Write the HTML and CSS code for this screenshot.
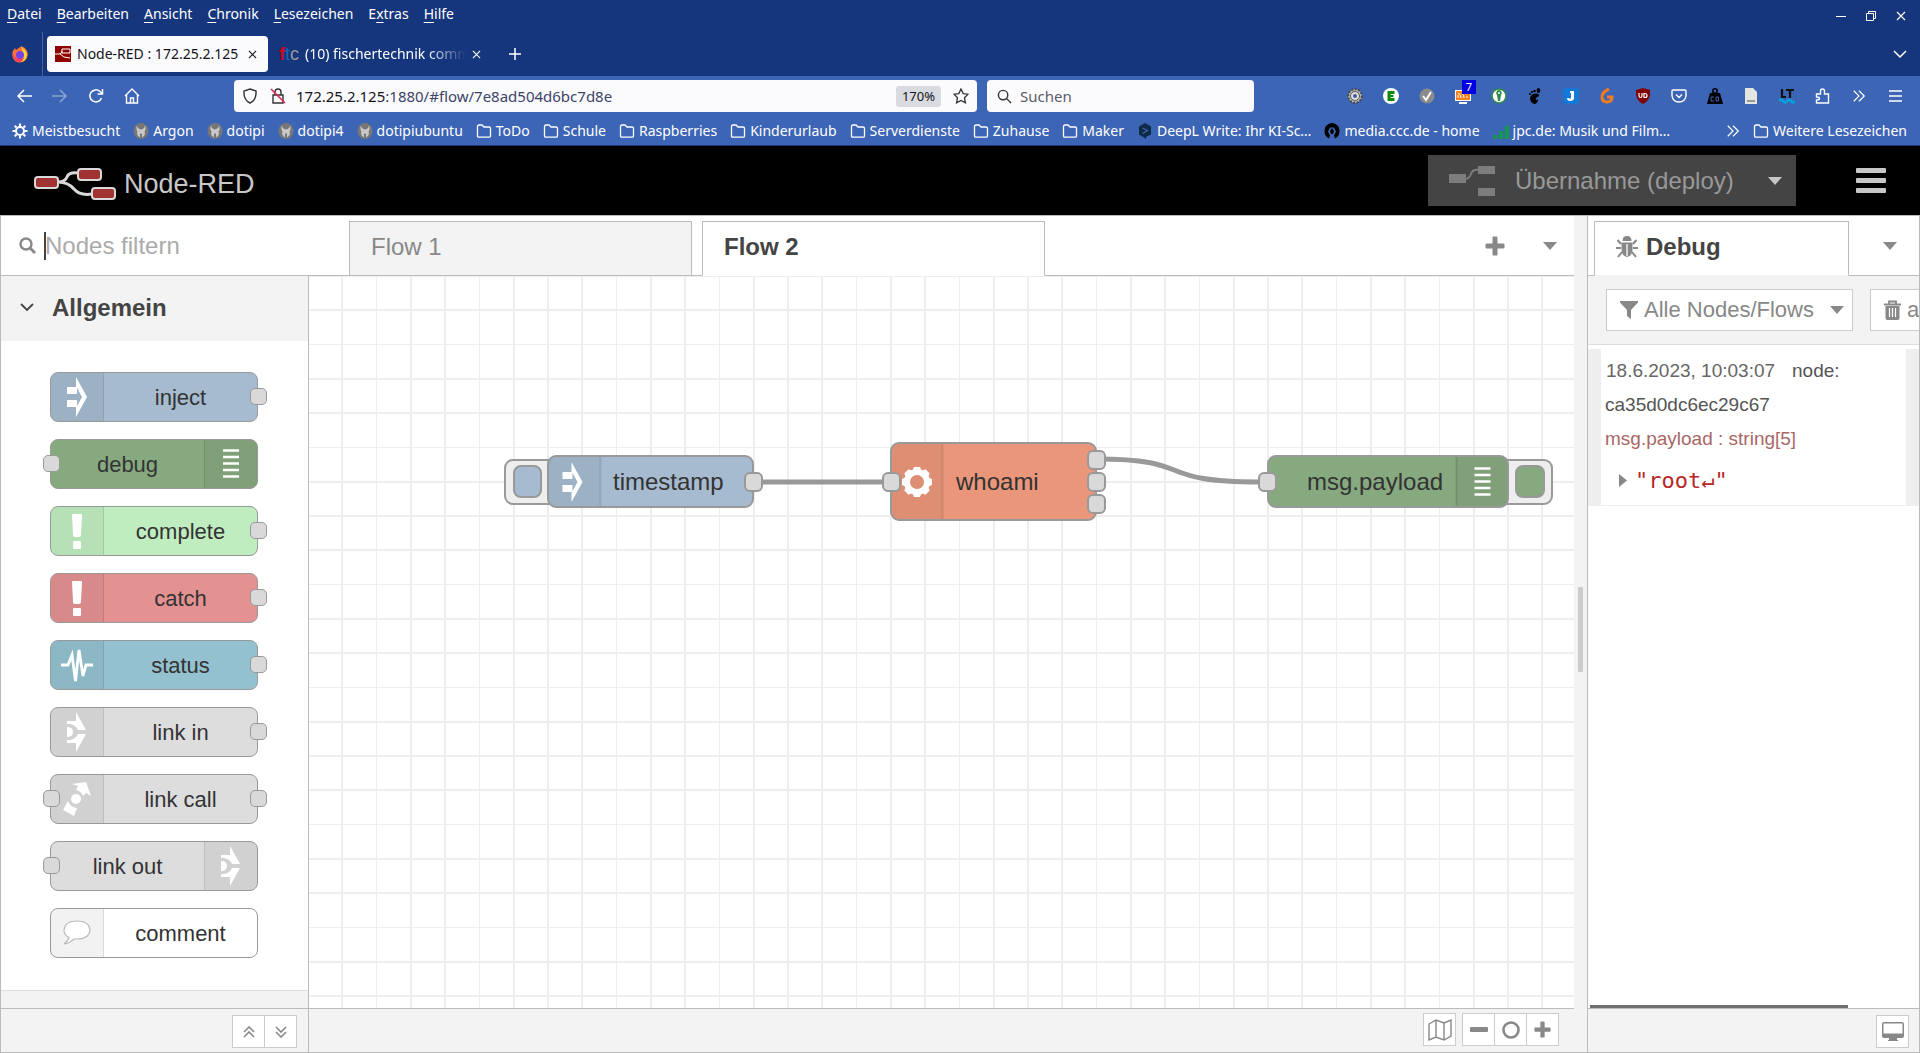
FILE: index.html
```html
<!DOCTYPE html>
<html lang="de">
<head>
<meta charset="utf-8">
<title>Node-RED : 172.25.2.125</title>
<link rel="stylesheet" href="styles.css">
</head>
<body>
<svg class="defs" aria-hidden="true">
  <symbol id="i-folder" viewBox="0 0 16 16"><path d="M1.500 13V3.500q0-1.500 1.500-1.500h3l2 2h5q1.500 0 1.500 1.500V13q0 1.200-1.500 1.200H3Q1.500 14.200 1.500 13z" fill="none" stroke="currentColor" stroke-width="1.300"/></symbol>
  <symbol id="i-rasp" viewBox="0 0 16 16"><ellipse cx="8" cy="8" rx="7.500" ry="8" fill="#777"/><path d="M4 2.500Q2.500 6 4.500 8.500L4 11q1 2.500 3 3.500v-4h2v4q2-1 3-3.500l-.500-2.500q2-2.500.500-6-.500 3.500-4 4-3.500-.500-4-4z" fill="#c9c9c9"/></symbol>
  <symbol id="i-gear" viewBox="0 0 16 16"><circle cx="8" cy="8" r="4" fill="none" stroke="currentColor" stroke-width="2"/><path d="M8 .500V3M8 13v2.500M.500 8H3M13 8h2.500M2.700 2.700l1.800 1.800M11.500 11.500l1.800 1.800M2.700 13.300l1.800-1.800M11.500 4.500l1.800-1.800" stroke="currentColor" stroke-width="2"/></symbol>
  <symbol id="i-close" viewBox="0 0 10 10"><path d="M1 1l8 8M9 1l-8 8" stroke="currentColor" stroke-width="1.200"/></symbol>
  <symbol id="i-more" viewBox="0 0 16 16"><path d="M2 2l6 6-6 6M8 2l6 6-6 6" fill="none" stroke="currentColor" stroke-width="1.400"/></symbol>
  <symbol id="i-caret" viewBox="0 0 14 8"><path d="M0 0h14L7 8z" fill="currentColor"/></symbol>
  <symbol id="i-plus" viewBox="0 0 20 20"><path d="M7.500 1.500q0-1 1-1h3q1 0 1 1v6h6q1 0 1 1v3q0 1-1 1h-6v6q0 1-1 1h-3q-1 0-1-1v-6h-6q-1 0-1-1v-3q0-1 1-1h6z" fill="currentColor"/></symbol>
  <symbol id="i-search" viewBox="0 0 17 17"><circle cx="7" cy="7" r="5.500" fill="none" stroke="currentColor" stroke-width="2.400"/><path d="M11 11l5 5" stroke="currentColor" stroke-width="2.800"/></symbol>
  <symbol id="i-arrow" viewBox="0 0 20 40"><path d="M0 10h9V0l11 20L9 40V30H0v-7h10v6l5-9-5-9v6H0z" fill="#fff"/></symbol>
  <symbol id="i-bang" viewBox="0 0 10 35"><path d="M1 0h8q1 0 1 1l-1 20q0 2-2 2H3q-2 0-2-2L0 1q0-1 1-1zM2 27h6q1 0 1 1v6q0 1-1 1H2q-1 0-1-1v-6q0-1 1-1z" fill="#fff"/></symbol>
  <symbol id="i-pulse" viewBox="0 0 32 40"><path d="M0 20h7l4-10 3.500 26L18 5l4 26 3-11h7" fill="none" stroke="#fff" stroke-width="2.800"/></symbol>
  <symbol id="i-link" viewBox="0 0 20 40"><path d="M0 9h9V0l10 18h-8q-2-5-8-6H0zM0 15q6 0 6 5t-6 5zM0 28h3q6-1 8-6h8L9 40v-9H0z" fill="#fff"/></symbol>
  <symbol id="i-linkcall" viewBox="0 0 28 34"><g fill="#fff"><circle cx="13" cy="17" r="5"/><path d="M9 2L23 0l5 14-5-3-3 3q-2-5-7-6l2-4zM5 19q2 6 9 7l-3 8L0 28z"/></g></symbol>
  <symbol id="i-lines" viewBox="0 0 16 30"><path d="M0 1.500h16M0 8h16M0 14.500h16M0 21h16M0 27.500h16" stroke="#fff" stroke-width="2.400"/></symbol>
  <symbol id="i-bubble" viewBox="0 0 28 26"><path d="M6 17.500Q1 15 1 10 2 1 14 1t13 9q-1 9-13 9h-3q-4 4-10 5 4-3 5-6.500z" fill="#fff" stroke="#bbb" stroke-width="1.200"/></symbol>
</svg>

<header class="browser">
  <div class="browser__top">
    <nav class="menubar" aria-label="Menü">
      <a href="#"><u>D</u>atei</a><a href="#"><u>B</u>earbeiten</a><a href="#"><u>A</u>nsicht</a><a href="#"><u>C</u>hronik</a><a href="#"><u>L</u>esezeichen</a><a href="#">E<u>x</u>tras</a><a href="#"><u>H</u>ilfe</a>
    </nav>
    <div class="window-buttons">
      <button aria-label="Minimieren"><svg width="10" height="10"><path d="M0 5.500h10" stroke="#fff"/></svg></button>
      <button aria-label="Wiederherstellen"><svg width="10" height="10"><path d="M.5 2.500h7v7h-7zM2.500 2.500v-2h7v7h-2" fill="none" stroke="#fff"/></svg></button>
      <button aria-label="Schließen"><svg width="10" height="10"><use href="#i-close"/></svg></button>
    </div>
  </div>
  <div class="tabstrip">
    <button class="tabstrip__home" aria-label="Firefox View"><svg width="16" height="18" viewBox="0 0 16 18"><path d="M8 2q5-1 7.500 5 1 6-3 9-5 3-9.500 0Q-1 12 .800 6L3 3l1 2z" fill="#ff7139"/><path d="M9 0q1 3 4 5 2 2 2 5-1 6-6 7 3-4 2-8Z" fill="#ffd43a"/><circle cx="8" cy="10" r="4" fill="#7542e5"/><path d="M1 9q2 5 7 5 3 0 4-2-1 5-5 5-5-1-6-8z" fill="#ff3b5c"/></svg></button>
    <div class="tab tab--active">
      <svg width="16" height="16" viewBox="0 0 16 16"><path fill="#8f0000" d="M0 0h16v16H0z"/><path d="M0 8h4q3 0 3-3M5 8q3 4 10 4M7 3h8v4H7z" fill="none" stroke="#fff"/></svg>
      <span class="tab__title">Node-RED : 172.25.2.125</span>
      <button aria-label="Tab schließen"><svg width="9" height="9"><use href="#i-close"/></svg></button>
    </div>
    <div class="tab">
      <span class="ftc" aria-hidden="true"><b>f</b><i>t</i>c</span>
      <span class="tab__title tab__title--fade">(10) fischertechnik comm</span>
      <button aria-label="Tab schließen"><svg width="9" height="9"><use href="#i-close"/></svg></button>
    </div>
    <button class="tabstrip__new" aria-label="Neuer Tab"><svg width="12" height="12"><path d="M6 0v12M0 6h12" stroke="#fff" stroke-width="1.500"/></svg></button>
    <button class="tabstrip__all" aria-label="Alle Tabs"><svg width="14" height="8"><path d="M1 1l6 6 6-6" fill="none" stroke="#fff" stroke-width="1.500"/></svg></button>
  </div>
  <div class="toolbar">
    <div class="toolbar__nav">
      <button aria-label="Zurück"><svg width="16" height="14"><path d="M16 7H2M8 1L2 7l6 6" fill="none" stroke="#fff" stroke-width="1.500"/></svg></button>
      <button aria-label="Vor" class="dim"><svg width="16" height="14"><path d="M0 7h14M8 1l6 6-6 6" fill="none" stroke="#fff" stroke-width="1.500"/></svg></button>
      <button aria-label="Neu laden"><svg width="16" height="16"><path d="M13.500 10A6 6 0 1 1 12 3.500l2 2M14.500 1v5h-5" fill="none" stroke="#fff" stroke-width="1.500"/></svg></button>
      <button aria-label="Startseite"><svg width="16" height="16"><path d="M1 8l7-7 7 7M2.500 7v8h11V7M6.500 15v-5h3v5" fill="none" stroke="#fff" stroke-width="1.400"/></svg></button>
    </div>
    <div class="urlbar">
      <svg width="16" height="16" viewBox="0 0 16 16"><path d="M8 1l6 2q.600 9-6 12Q1.400 12 2 3z" fill="none" stroke="#333" stroke-width="1.400"/></svg>
      <svg width="16" height="16" viewBox="0 0 16 16"><path d="M3 7h10v8H3zM5 7V4q0-3 3-3t3 3v3" fill="none" stroke="#333" stroke-width="1.400"/><path d="M1 1l14 14" stroke="#e22850" stroke-width="1.600"/></svg>
      <span class="urlbar__text">172.25.2.125<span>:1880/#flow/7e8ad504d6bc7d8e</span></span>
      <button class="zoom-level">170%</button>
      <button aria-label="Lesezeichen setzen"><svg width="16" height="16" viewBox="0 0 16 16"><path d="M8 1l2.200 4.600 4.800.600-3.500 3.500.900 5.100L8 12.400l-4.400 2.400.900-5.100L1 6.200l4.800-.600z" fill="none" stroke="#333" stroke-width="1.300"/></svg></button>
    </div>
    <label class="searchbar">
      <svg width="15" height="15" viewBox="0 0 16 16"><circle cx="6.500" cy="6.500" r="5" fill="none" stroke="#333" stroke-width="1.500"/><path d="M10 10l5 5" stroke="#333" stroke-width="1.500"/></svg>
      <input type="text" placeholder="Suchen" aria-label="Suchen">
    </label>
    <div class="extensions">
      <button aria-label="Einstellungen"><svg width="16" height="16" viewBox="0 0 16 16"><circle cx="8" cy="8" r="6.800" fill="#bbb" stroke="#444" stroke-width="2" stroke-dasharray="2 1.500"/><circle cx="8" cy="8" r="4.500" fill="#ddd" stroke="#555"/><circle cx="8" cy="8" r="2" fill="#445f9e"/></svg></button>
      <button aria-label="E"><svg width="16" height="16" viewBox="0 0 16 16"><circle cx="8" cy="8" r="8" fill="#fff"/><path d="M4.500 3h7v3h-4v1h3v2h-3v1h4v3h-7z" fill="#0b8a0b"/></svg></button>
      <button aria-label="Prüfung"><svg width="16" height="16" viewBox="0 0 16 16"><circle cx="8" cy="8" r="7.500" fill="#8b8b8b"/><path d="M4 8l3 4 5-8" fill="none" stroke="#fff" stroke-width="2"/></svg></button>
      <button aria-label="Feeds" class="badged"><svg width="16" height="16" viewBox="0 0 16 16"><path fill="#fff" d="M0 2h16v11H0zM4 14h8v2H4z"/><path fill="#f58220" d="M1 3h14v9H1z"/><path d="M3 10V7M6 10q0-4-3-5M9 10q0-3-2-5M12 10V8" stroke="#fff" fill="none"/></svg><span class="badge">7</span></button>
      <button aria-label="Passwörter"><svg width="16" height="16" viewBox="0 0 16 16"><circle cx="8" cy="8" r="7" fill="#fff" stroke="#2c8a4b" stroke-width="1.500"/><path d="M8 2a3 3 0 0 1 2 5L9 13H7L6 7a3 3 0 0 1 2-5z" fill="#2c8a4b"/><circle cx="8" cy="5" r="1" fill="#fff"/></svg></button>
      <button aria-label="GNOME"><svg width="16" height="16" viewBox="0 0 16 16"><path d="M9 5.500q4 0 2.500 3L9 10q-1 1 0 2 1 0 2-1 0 5-4 5-4-2-4-6 1-4.500 6-4.500z"/><ellipse cx="11.500" cy="2.500" rx="1.800" ry="2.500"/><circle cx="7.500" cy="3" r="1.300"/><circle cx="5" cy="4" r="1.100"/><circle cx="3" cy="6" r="1"/></svg></button>
      <button aria-label="Joplin"><svg width="16" height="16" viewBox="0 0 16 16"><rect width="16" height="16" rx="3" fill="#1478d6"/><path d="M7 3h4v7q0 3-4 3-3 0-3-3h2q1 1.500 2 0V5H7z" fill="#fff"/></svg></button>
      <button aria-label="G"><svg width="16" height="16" viewBox="0 0 16 16"><path d="M10 1Q3 4 3 9q0 5 5 5t5-5H8" fill="none" stroke="#f47b20" stroke-width="3"/></svg></button>
      <button aria-label="uBlock"><svg width="16" height="16" viewBox="0 0 16 16"><path d="M8 0l7 2q1 10-7 14Q0 12 1 2z" fill="#800000"/><path d="M4 5v3q0 1.500 1.500 1.500T7 8V5M9 5.500h1q2 0 2 2t-2 2H9z" fill="none" stroke="#fff" stroke-width="1.200"/></svg></button>
      <button aria-label="Pocket"><svg width="16" height="16" viewBox="0 0 16 16"><path d="M2 2h12q1 0 1 1v5q-1 6-7 6T1 8V3q0-1 1-1zM5 6.500l3 3 3-3" fill="none" stroke="#fff" stroke-width="1.400"/></svg></button>
      <button aria-label="Gewicht"><svg width="16" height="16" viewBox="0 0 16 16"><circle cx="8" cy="3" r="2.200" fill="none" stroke="#000" stroke-width="1.500"/><path d="M3 5h10l3 11H0z"/><path d="M7 9H4v4h3M9 9h2.500v4H9z" fill="none" stroke="#3d65b5"/></svg></button>
      <button aria-label="Dokument"><svg width="16" height="16" viewBox="0 0 16 16"><path d="M2 0h8l4 4v12H2z" fill="#e4e4e0"/><path d="M4 12h8v2H4z" fill="#999"/></svg></button>
      <button aria-label="LanguageTool"><svg width="16" height="16" viewBox="0 0 16 16"><path d="M3 1v8h4M7 2h8M11 2v8" fill="none" stroke="#111" stroke-width="2.200"/><path d="M0 13q2-3 4 0t4 0 4 0 4 0" fill="none" stroke="#00a2e0" stroke-width="2.500"/></svg></button>
      <button aria-label="Erweiterungen"><svg width="16" height="16" viewBox="0 0 16 16"><path d="M1.500 6h4V3q0-2 2-2t2 2v3h4v9h-12v-3q3 0 3-1.500T1.500 9z" fill="none" stroke="#fff" stroke-width="1.400"/></svg></button>
      <button aria-label="Mehr"><svg width="14" height="14"><use href="#i-more"/></svg></button>
      <button aria-label="Anwendungsmenü"><svg width="13" height="12"><path d="M0 1h13M0 6h13M0 11h13" stroke="#fff" stroke-width="1.400"/></svg></button>
    </div>
  </div>
  <nav class="bookmarks" aria-label="Lesezeichen">
    <a href="#"><svg><use href="#i-gear"/></svg>Meistbesucht</a>
    <a href="#"><svg><use href="#i-rasp"/></svg>Argon</a>
    <a href="#"><svg><use href="#i-rasp"/></svg>dotipi</a>
    <a href="#"><svg><use href="#i-rasp"/></svg>dotipi4</a>
    <a href="#"><svg><use href="#i-rasp"/></svg>dotipiubuntu</a>
    <a href="#"><svg><use href="#i-folder"/></svg>ToDo</a>
    <a href="#"><svg><use href="#i-folder"/></svg>Schule</a>
    <a href="#"><svg><use href="#i-folder"/></svg>Raspberries</a>
    <a href="#"><svg><use href="#i-folder"/></svg>Kinderurlaub</a>
    <a href="#"><svg><use href="#i-folder"/></svg>Serverdienste</a>
    <a href="#"><svg><use href="#i-folder"/></svg>Zuhause</a>
    <a href="#"><svg><use href="#i-folder"/></svg>Maker</a>
    <a href="#"><svg viewBox="0 0 16 16"><path d="M8 0l6 3.500v8L9 14v2l-2-1.500-5-3v-8z" fill="#0f2b46"/><path d="M5.500 5l5 2.500-5 3" fill="none" stroke="#3d65b5" stroke-width="1.300"/></svg>DeepL Write: Ihr KI-Sc…</a>
    <a href="#"><svg viewBox="0 0 16 16"><path d="M8 0q7 1 7.500 7T11 15.500l-1-3 2-4-2-4H6l-2 4 2 4-1 3Q0 13 .500 7T8 0z"/><path d="M8 5l2 3-1 3H7L6 8z"/></svg>media.ccc.de - home</a>
    <a href="#"><svg viewBox="0 0 16 16"><path d="M0 12h4v4H0zM6 8h4v8H6zM12 3h4v13h-4z" fill="#149a4c"/></svg>jpc.de: Musik und Film…</a>
    <button class="bookmarks__more" aria-label="Weitere anzeigen"><svg><use href="#i-more"/></svg></button>
    <a href="#"><svg><use href="#i-folder"/></svg>Weitere Lesezeichen</a>
  </nav>
</header>

<header class="app-header">
  <div class="logo">
    <svg width="82" height="34" viewBox="0 0 82 34"><path d="M24 14q7 0 9-5t11-4M24 14q10 0 16 7t18 5" fill="none" stroke="#d8d8d8" stroke-width="3"/><g fill="#a03232" stroke="#d8d8d8" stroke-width="2"><rect x="1" y="9" width="23" height="11" rx="3"/><rect x="44" y="1" width="23" height="11" rx="3"/><rect x="58" y="20" width="23" height="11" rx="3"/></g></svg>
    <span>Node-RED</span>
  </div>
  <button class="deploy">
    <svg width="46" height="30" viewBox="0 0 46 30"><path d="M0 8h17v9H0zM29 0h17v8H29zM29 22h17v8H29z" fill="#7d7d7d"/><path d="M16 13q4 0 6-5t7-4" fill="none" stroke="#7d7d7d" stroke-width="2"/></svg>
    <span>Übernahme (deploy)</span>
    <svg class="deploy__caret" width="14" height="8"><use href="#i-caret"/></svg>
  </button>
  <button class="burger" aria-label="Hauptmenü"><i></i><i></i><i></i></button>
</header>

<main class="editor">
  <section class="work">
    <div class="work__top">
      <label class="filter">
        <svg width="17" height="17"><use href="#i-search"/></svg>
        <input type="text" placeholder="Nodes filtern" aria-label="Nodes filtern">
      </label>
      <div class="flows">
        <a class="flow" href="#">Flow 1</a>
        <a class="flow flow--active" href="#">Flow 2</a>
      </div>
      <div class="flow-actions">
        <button aria-label="Flow hinzufügen"><svg width="20" height="20"><use href="#i-plus"/></svg></button>
        <button aria-label="Flows auflisten"><svg width="14" height="8"><use href="#i-caret"/></svg></button>
      </div>
    </div>
    <div class="work__body">
      <aside class="palette">
        <button class="category"><svg width="14" height="9"><path d="M1 1l6 6 6-6" fill="none" stroke="#444" stroke-width="1.800"/></svg>Allgemein</button>
        <ul class="nodes">
          <li class="node node--blue"><span class="node__icon"><svg width="20" height="40"><use href="#i-arrow"/></svg></span><span class="node__label">inject</span><i class="port port--out"></i></li>
          <li class="node node--green"><i class="port port--in"></i><span class="node__label">debug</span><span class="node__icon node__icon--end"><svg width="16" height="30"><use href="#i-lines"/></svg></span></li>
          <li class="node node--mint"><span class="node__icon"><svg width="10" height="35"><use href="#i-bang"/></svg></span><span class="node__label">complete</span><i class="port port--out"></i></li>
          <li class="node node--red"><span class="node__icon"><svg width="10" height="35"><use href="#i-bang"/></svg></span><span class="node__label">catch</span><i class="port port--out"></i></li>
          <li class="node node--teal"><span class="node__icon"><svg width="32" height="40"><use href="#i-pulse"/></svg></span><span class="node__label">status</span><i class="port port--out"></i></li>
          <li class="node node--grey"><span class="node__icon"><svg width="20" height="40"><use href="#i-link"/></svg></span><span class="node__label">link in</span><i class="port port--out"></i></li>
          <li class="node node--grey"><i class="port port--in"></i><span class="node__icon"><svg width="28" height="34"><use href="#i-linkcall"/></svg></span><span class="node__label">link call</span><i class="port port--out"></i></li>
          <li class="node node--grey"><i class="port port--in"></i><span class="node__label">link out</span><span class="node__icon node__icon--end"><svg width="20" height="40"><use href="#i-link"/></svg></span></li>
          <li class="node node--white"><span class="node__icon"><svg width="28" height="26"><use href="#i-bubble"/></svg></span><span class="node__label">comment</span></li>
        </ul>
        <div class="palette__next"></div>
      </aside>
      <div class="canvas">
        <svg width="100%" height="100%">
          <defs>
            <pattern id="grid" x="-1" width="240" height="240" patternUnits="userSpaceOnUse">
              <g fill="#eee"><path d="M0 0h240v1H0zM0 33h240v2H0zM0 68h240v1H0zM0 102h240v2H0zM0 136h240v2H0zM0 171h240v1H0zM0 205h240v2H0zM0 239h240v1H0z"/><path d="M0 0h1v240H0zM33 0h2v240h-2zM68 0h1v240h-1zM102 0h2v240h-2zM136 0h2v240h-2zM171 0h1v240h-1zM205 0h2v240h-2zM239 0h1v240h-1z"/></g>
            </pattern>
          </defs>
          <rect width="100%" height="100%" fill="url(#grid)"/>
          <g fill="none" stroke="#999" stroke-width="5"><path d="M445 206h137M788 183c100 0 55 23 162 23"/></g>
          <g stroke="#999" stroke-width="2">
            <rect x="196" y="184" width="60" height="44" rx="8" fill="#eee"/>
            <rect x="205" y="190" width="27" height="31" rx="7" fill="#a6bbcf"/>
            <rect x="1180" y="184" width="63" height="44" rx="8" fill="#eee"/>
            <rect x="1207" y="190" width="28" height="31" rx="7" fill="#87a980"/>
            <rect x="239" y="180" width="205" height="51" rx="8" fill="#a6bbcf"/>
            <rect x="582" y="167" width="205" height="77" rx="8" fill="#e9967a"/>
            <rect x="959" y="180" width="240" height="51" rx="8" fill="#87a980"/>
          </g>
          <g fill="#000" fill-opacity=".05"><path d="M247 181h44v49h-44q-7 0-7-7v-35q0-7 7-7zM590 168h43v75h-43q-7 0-7-7v-61q0-7 7-7zM1147 181h44q7 0 7 7v35q0 7-7 7h-44z"/></g>
          <path d="M291.500 181v49M633.500 168v75M1147.500 181v49" stroke="#000" stroke-opacity=".1" stroke-width="2"/>
          <use href="#i-arrow" x="253" y="186" width="21" height="40"/>
          <use href="#i-lines" x="1165" y="191" width="17" height="30"/>
          <g transform="translate(608 206)"><circle r="10" fill="none" stroke="#fff" stroke-width="6"/><path d="M-3-15h6l2 5h-10zM-3 15h6l2-5h-10zM-15-3v6l5 2v-10zM15-3v6l-5 2v-10zM-12.700-8.500l4.200-4.200 5 2.200-7 7zM12.700-8.500l-4.200-4.200-5 2.200 7 7zM-12.700 8.500l4.200 4.200 5-2.200-7-7zM12.700 8.500l-4.200 4.200-5-2.200 7-7z" fill="#fff"/></g>
          <g fill="#d9d9d9" stroke="#999" stroke-width="2">
            <rect x="436" y="197" width="17" height="18" rx="5"/>
            <rect x="574" y="197" width="17" height="18" rx="5"/>
            <rect x="779" y="175" width="17" height="18" rx="5"/>
            <rect x="779" y="197" width="17" height="18" rx="5"/>
            <rect x="779" y="219" width="17" height="18" rx="5"/>
            <rect x="950" y="197" width="17" height="18" rx="5"/>
          </g>
          <text x="304" y="214">timestamp</text>
          <text x="647" y="214">whoami</text>
          <text x="998" y="214">msg.payload</text>
        </svg>
      </div>
    </div>
    <footer class="work__footer">
      <div class="palette-footer">
        <div class="btn-group">
          <button aria-label="Alle einklappen"><svg width="14" height="12"><path d="M2 6l5-5 5 5M2 11l5-5 5 5" fill="none" stroke="#888" stroke-width="1.600"/></svg></button>
          <button aria-label="Alle ausklappen"><svg width="14" height="12"><path d="M2 1l5 5 5-5M2 6l5 5 5-5" fill="none" stroke="#888" stroke-width="1.600"/></svg></button>
        </div>
      </div>
      <div class="canvas-footer">
        <div class="btn-group"><button aria-label="Übersicht"><svg width="24" height="22" viewBox="0 0 24 22"><path d="M1 5l7-4 8 3 7-3v16l-7 4-8-3-7 3zM8 1v17M16 4v17" fill="none" stroke="#888" stroke-width="1.400"/></svg></button></div>
        <div class="btn-group">
          <button aria-label="Verkleinern"><svg width="18" height="18"><rect x="0" y="6" width="18" height="5" rx="1" fill="#888"/></svg></button>
          <button aria-label="Zoom zurücksetzen"><svg width="18" height="18"><circle cx="9" cy="9" r="7.500" fill="none" stroke="#888" stroke-width="2.600"/></svg></button>
          <button aria-label="Vergrößern"><svg width="17" height="17"><use href="#i-plus"/></svg></button>
        </div>
      </div>
    </footer>
  </section>

  <div class="separator"><i></i></div>

  <aside class="sidebar">
    <div class="sidebar__tabs">
      <a class="sidebar__tab" href="#"><svg width="22" height="22" viewBox="0 0 22 22"><path d="M6.500 5q0-5 4.500-5t4.500 5z" fill="#888"/><path d="M5.500 6.500h11V13q0 7-5.500 8-5.500-1-5.500-8z" fill="#888"/><path d="M5 8L1.500 4M17 8l3.500-4M5 12H0M17 12h5M6 16l-4 5M16 16l4 5" stroke="#888" stroke-width="2"/><path d="M11 8v12" stroke="#fff" stroke-width="1.300"/></svg>Debug</a>
      <button aria-label="Seitenleisten"><svg width="14" height="8"><use href="#i-caret"/></svg></button>
    </div>
    <div class="sidebar__tools">
      <button class="tool"><svg width="18" height="18" viewBox="0 0 18 18"><path d="M0 0h18v1.500L11 9v9l-4-3V9L0 1.500z" fill="#888"/></svg><span>Alle Nodes/Flows</span><svg class="tool__caret" width="14" height="8"><use href="#i-caret"/></svg></button>
      <button class="tool"><svg width="17" height="20" viewBox="0 0 17 20"><path d="M5 4V1.500h7V4M0 4.500h17" fill="none" stroke="#888" stroke-width="1.800"/><path d="M1.500 6h14v12q0 2-2 2h-10q-2 0-2-2z" fill="#888"/><path d="M5.500 8v9M8.500 8v9M11.500 8v9" stroke="#fff" stroke-width="1.200"/></svg><span>alle</span></button>
    </div>
    <div class="messages">
      <article class="message">
        <p class="message__meta"><time>18.6.2023, 10:03:07</time><span>node:</span></p>
        <p class="message__meta"><a href="#">ca35d0dc6ec29c67</a></p>
        <p class="message__topic">msg.payload : string[5]</p>
        <p class="message__value"><svg width="8" height="13"><path d="M0 0l8 6.500L0 13z" fill="#888"/></svg>"root↵"</p>
      </article>
      <div class="scroll-thumb"></div>
    </div>
    <footer class="sidebar__footer">
      <div class="btn-group"><button aria-label="Dashboard öffnen"><svg width="22" height="20" viewBox="0 0 22 20"><path d="M2 0h18q2 0 2 2v12q0 2-2 2h-5v2h1v1H6v-1h1v-2H2q-2 0-2-2V2q0-2 2-2zM1.500 1.500v10h19v-10z" fill="#888" fill-rule="evenodd"/></svg></button></div>
    </footer>
  </aside>
</main>
</body>
</html>
```
FILE: styles.css
```css
* { box-sizing: border-box; }
body {
  margin: 0;
  height: 100vh;
  display: flex;
  flex-direction: column;
  overflow: hidden;
  font-family: "Liberation Sans", Arial, sans-serif;
  font-size: 24px;
  color: #444;
  background: #fff;
}
button, input { font: inherit; color: inherit; margin: 0; padding: 0; border: 0; background: none; }
input { outline: 0; min-width: 0; }
a { color: inherit; text-decoration: none; }
svg { display: block; flex: none; }
.defs { position: absolute; width: 0; height: 0; }

/* Browser window */
.browser {
  flex: none;
  font-family: "Noto Sans", "Open Sans", sans-serif;
  font-size: 14px;
  line-height: 20px;
  color: #fff;
  background: #15357c;
  border-bottom: 1px solid #15357c;
}
.browser__top { display: flex; justify-content: space-between; height: 32px; padding: 4px 14px 0 7px; }
.menubar { display: flex; gap: 15px; }
.menubar u { text-underline-offset: 3px; }
.window-buttons { display: flex; align-items: center; gap: 20px; height: 24px; }
.tabstrip { display: flex; align-items: center; height: 44px; }
.tabstrip__home { align-self: stretch; width: 43px; padding-left: 12px; border-right: 1px solid #4a6294; }
.tab { display: flex; align-items: center; gap: 6px; width: 221px; height: 36px; margin-left: 4px; padding: 0 11px 0 8px; border-radius: 4px; }
.tab + .tab { margin-left: 3px; }
.tab--active { background: #fbfbfe; color: #15141a; }
.tab__title { flex: 1; min-width: 0; white-space: nowrap; }
.tab__title--fade { mask-image: linear-gradient(to right, #000 75%, transparent); }
.ftc { display: flex; font: 18px "Liberation Sans", sans-serif; color: #999; }
.ftc b { color: #d0021b; }
.ftc i { color: #1268b3; font-style: normal; }
.tabstrip__new { margin-left: 17px; }
.tabstrip__all { margin-left: auto; padding-right: 13px; }

.toolbar { display: flex; align-items: center; height: 40px; background: #3d65b5; }
.toolbar__nav { display: flex; align-items: center; gap: 20px; width: 234px; padding-left: 16px; }
.dim { opacity: .4; }
.urlbar { flex: 0 1 743px; display: flex; align-items: center; gap: 12px; height: 32px; padding: 0 8px; border-radius: 4px; background: #fbfbfe; color: #15141a; }
.urlbar__text { flex: 1; margin-left: -2px; font-size: 15px; }
.urlbar__text span { color: #3b4468; }
.zoom-level { width: 45px; height: 21px; border-radius: 3px; background: #d9dbe0; font-size: 13px; line-height: 20px; }
.searchbar { flex: 0 1 267px; display: flex; align-items: center; gap: 8px; height: 32px; margin-left: 10px; padding: 0 10px; border-radius: 4px; background: #fbfbfe; color: #15141a; font-size: 15px; }
.searchbar input { flex: 1; }
.searchbar input::placeholder { color: #5b5b66; opacity: 1; }
.extensions { display: flex; margin-left: auto; padding-right: 7px; }
.extensions button { width: 36px; display: flex; justify-content: center; align-items: center; height: 20px; }
.badged { position: relative; }
.badge { position: absolute; left: 17px; top: -6px; width: 14px; height: 14px; background: #0000e0; color: #fff; font-size: 11px; line-height: 14px; text-align: center; }

.bookmarks { display: flex; align-items: center; gap: 13px; height: 29px; padding: 0 13px 0 12px; background: #3d65b5; white-space: nowrap; }
.bookmarks a { display: flex; align-items: center; gap: 4px; }
.bookmarks svg { width: 16px; height: 16px; }
.bookmarks__more { margin-left: auto; }
.bookmarks__more svg { width: 14px; height: 14px; }

/* Application header */
.app-header { flex: none; display: flex; align-items: center; height: 69px; padding: 0 34px; background: #000; }
.logo { display: flex; align-items: center; gap: 8px; margin-right: auto; padding-top: 8px; font-size: 27px; color: #c7c7c7; }
.deploy { display: flex; align-items: center; width: 368px; height: 51px; padding: 0 14px 0 21px; background: #444; color: #999; }
.deploy span { margin-left: 20px; }
.deploy__caret { margin-left: auto; color: #c7c7c7; }
.burger { display: grid; gap: 5px; width: 30px; margin-left: 60px; }
.burger i { height: 5px; border-radius: 1px; background: #c7c7c7; }

/* Editor */
.editor { flex: 1; min-height: 0; display: flex; border-top: 1px solid #bbb; border-bottom: 1px solid #bbb; }
.work { flex: 1; min-width: 0; display: flex; flex-direction: column; border-left: 1px solid #bbb; }
.work__top { flex: none; display: flex; height: 60px; border-bottom: 1px solid #bbb; }
.filter { position: relative; flex: none; display: flex; align-items: center; gap: 9px; width: 348px; padding-left: 18px; color: #888; }
.filter::after { content: ""; position: absolute; left: 43px; top: 16px; width: 2px; height: 28px; background: #444; }
.filter input { flex: 1; }
.filter input::placeholder { color: #aaa; opacity: 1; }
.flows { flex: 1; display: flex; gap: 10px; align-items: flex-end; margin-bottom: -1px; }
.flow { width: 343px; height: 55px; padding: 0 21px; border: 1px solid #bbb; background: #f3f3f3; color: #888; line-height: 50px; }
.flow--active { border-bottom-color: #fff; background: #fff; color: #444; font-weight: bold; }
.flow-actions { display: flex; align-items: center; gap: 38px; padding-right: 17px; color: #888; }

.work__body { flex: 1; min-height: 0; display: flex; }
.palette { flex: none; width: 308px; display: flex; flex-direction: column; border-right: 1px solid #bbb; overflow: hidden; }
.category { flex: none; display: flex; align-items: center; gap: 18px; height: 65px; padding: 0 0 2px 19px; background: #f3f3f3; font-weight: bold; }
.nodes { list-style: none; flex: none; display: grid; gap: 17px; margin: 0; padding: 31px 50px 32px 49px; }
.palette__next { flex: 1; border-top: 1px solid #ddd; background: #f3f3f3; }
.node { position: relative; display: flex; height: 50px; border: 1px solid #999; border-radius: 8px; font-size: 22px; color: #333; }
.node__icon { width: 53px; display: flex; align-items: center; justify-content: center; border-right: 1px solid rgba(0, 0, 0, .1); border-radius: 7px 0 0 7px; background: rgba(0, 0, 0, .05); }
.node__icon--end { border-right: 0; border-left: 1px solid rgba(0, 0, 0, .1); border-radius: 0 7px 7px 0; }
.node__label { flex: 1; text-align: center; line-height: 50px; }
.node--blue { background: #a6bbcf; }
.node--green { background: #87a980; }
.node--mint { background: #c0edc0; }
.node--red { background: #e49191; }
.node--teal { background: #94c1d0; }
.node--grey { background: #ddd; }
.node--white { background: #fff; }
.port { position: absolute; top: 15px; width: 17px; height: 17px; border: 1px solid #999; border-radius: 5px; background: #d9d9d9; }
.port--in { left: -8px; }
.port--out { right: -10px; }

.canvas { flex: 1; min-width: 0; position: relative; overflow: hidden; }
.canvas > svg { position: absolute; inset: 0; }
.canvas text { font-size: 24px; fill: #333; }

.work__footer { flex: none; display: flex; height: 44px; border-top: 1px solid #bbb; background: #f3f3f3; }
.palette-footer { width: 308px; display: flex; justify-content: flex-end; align-items: center; padding: 2px 11px 0 0; border-right: 1px solid #bbb; }
.canvas-footer { flex: 1; display: flex; justify-content: flex-end; align-items: center; gap: 6px; padding: 0 15px 2px 0; }
.btn-group { display: flex; border: 1px solid #ccc; background: #fff; color: #888; }
.btn-group button { display: flex; align-items: center; justify-content: center; width: 31px; height: 31px; }
.btn-group button + button { width: 32px; border-left: 1px solid #ccc; }

.separator { flex: none; width: 13px; display: flex; align-items: center; padding-bottom: 10px; background: #f3f3f3; }
.separator i { width: 5px; height: 85px; margin-left: 4px; border-radius: 1px; background: #ccc; }

/* Debug sidebar */
.sidebar { flex: none; width: 333px; display: flex; flex-direction: column; border: solid #bbb; border-width: 0 1px; overflow: hidden; }
.sidebar__tabs { flex: none; display: flex; align-items: flex-end; justify-content: space-between; height: 60px; padding: 0 22px 0 6px; border-bottom: 1px solid #bbb; color: #888; }
.sidebar__tabs button { align-self: center; }
.sidebar__tab { display: flex; align-items: center; gap: 8px; width: 255px; height: 55px; margin-bottom: -1px; padding: 0 0 4px 21px; border: 1px solid #bbb; border-bottom-color: #f3f3f3; background: #fff; color: #444; font-weight: bold; }
.sidebar__tools { flex: none; display: flex; gap: 17px; height: 69px; padding: 13px 0 0 18px; border-bottom: 1px solid #ddd; background: #f3f3f3; }
.tool { flex: none; display: flex; align-items: center; gap: 6px; height: 42px; padding: 0 8px 0 13px; border: 1px solid #ccc; background: #fff; color: #888; font-size: 22px; white-space: nowrap; }
.tool__caret { margin-left: 10px; }
.messages { flex: 1; min-height: 0; display: flex; flex-direction: column; justify-content: space-between; padding-top: 4px; }
.message { padding: 5px 4px 0; border: solid #eee; border-width: 0 13px 1px; font-size: 19px; line-height: 34px; }
.message p { margin: 0; }
.message__meta { color: #555; }
.message__meta time { margin: 0 17px 0 1px; color: #666; }
.message__topic { color: #aa6767; }
.message__value { display: flex; align-items: center; gap: 8px; height: 49px; padding-left: 14px; font-family: "DejaVu Sans Mono", monospace; font-size: 22px; color: #b72828; }
.scroll-thumb { width: 258px; height: 3px; margin-left: 2px; background: #6e6e6e; }
.sidebar__footer { flex: none; display: flex; align-items: center; justify-content: flex-end; height: 44px; padding: 2px 10px 0 0; border-top: 1px solid #bbb; background: #f3f3f3; }
```
